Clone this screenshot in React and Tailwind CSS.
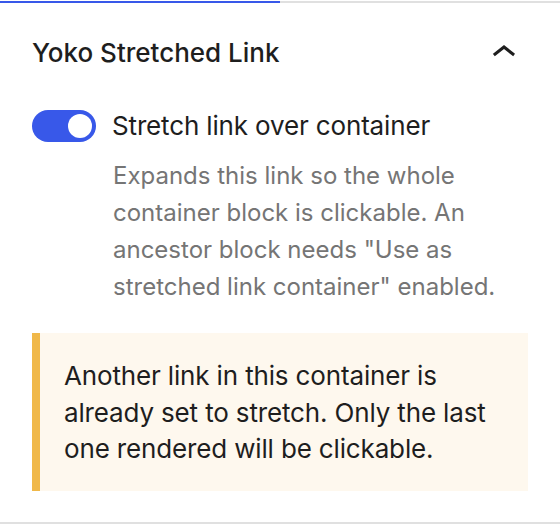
export default function App() {
  return (
    <div className="w-[560px] h-[524px] bg-white flex flex-col font-['Inter',sans-serif] text-[#1e1e1e]">
      {/* tab strip */}
      <div className="mt-px flex h-[2px]">
        <div className="w-[280px] bg-[#3858e9]" />
        <div className="flex-1 bg-[#e0e0e0]" />
      </div>

      <div className="flex-1 flex flex-col px-8 border-b-2 border-[#e0e0e0]">
        <div className="mt-[26px] flex h-12 items-center justify-between">
          <h2 className="text-[26px] font-medium leading-none">Yoko Stretched Link</h2>
          <svg viewBox="0 0 24 24" className="h-12 w-12" aria-hidden="true">
            <path d="M6.5 12.4L12 8l5.5 4.4-.9 1.2L12 10l-4.6 3.6-1-1.2z" fill="#1e1e1e" />
          </svg>
        </div>

        <div className="mt-[33px] flex h-8 items-center gap-4">
          <span className="relative h-8 w-16 shrink-0 rounded-full bg-[#3858e9]">
            <span className="absolute right-1 top-1 h-6 w-6 rounded-full bg-white" />
          </span>
          <span className="text-[26px] leading-none tracking-[-0.15px]">Stretch link over container</span>
        </div>

        <p className="mt-[15px] ml-[81px] text-[24px] leading-[37px] text-[#757575]">
          Expands this link so the whole container block is clickable. An ancestor block needs "Use as
          stretched link container" enabled.
        </p>

        <div className="mt-[28px] border-l-8 border-[#f0b849] bg-[#fef8ee] px-6 pt-[25px] pb-[23px]">
          <p className="text-[26px] leading-[36.5px] tracking-[-0.15px]">
            Another link in this container is already set to stretch. Only the last one rendered will
            be clickable.
          </p>
        </div>
      </div>
    </div>
  )
}
